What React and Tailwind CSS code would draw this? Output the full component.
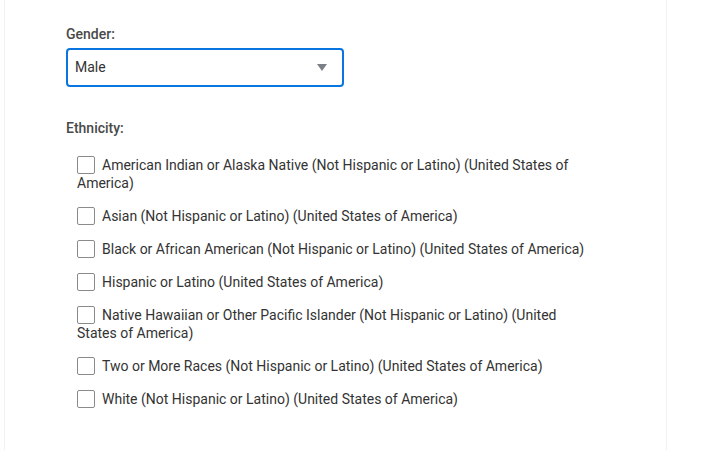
import React from 'react';

const options = [
  'American Indian or Alaska Native (Not Hispanic or Latino) (United States of America)',
  'Asian (Not Hispanic or Latino) (United States of America)',
  'Black or African American (Not Hispanic or Latino) (United States of America)',
  'Hispanic or Latino (United States of America)',
  'Native Hawaiian or Other Pacific Islander (Not Hispanic or Latino) (United States of America)',
  'Two or More Races (Not Hispanic or Latino) (United States of America)',
  'White (Not Hispanic or Latino) (United States of America)',
];

export default function App() {
  return (
    <div className="min-h-screen bg-white" style={{ fontFamily: 'Roboto, "Liberation Sans", sans-serif' }}>
      <div className="ml-[4px] w-[663px] h-[450px] border-x border-[#f1f1f1] pl-[61px] pt-[25px]">
        <label className="block text-[14px] font-medium leading-[18px] text-[#494949]">Gender:</label>
        <div className="mt-[5px] w-[278px] h-[39px] rounded-[4px] border-2 border-[#0875e1] flex items-center justify-between pl-[7px] pr-[15px]">
          <span className="text-[14px] text-[#333333]">Male</span>
          <svg width="10" height="7" viewBox="0 0 10 7">
            <path d="M0 0 H10 L5 7 Z" fill="#7b7f86" />
          </svg>
        </div>

        <label className="block mt-[32px] text-[14px] font-medium leading-[18px] text-[#494949]">Ethnicity:</label>

        <div className="mt-[19px] ml-[11px] w-[515px]">
          {options.map((opt) => (
            <div key={opt} className="mb-[15px] text-[14px] leading-[18px] text-[#333333]">
              <span className="inline-block align-[-4px] w-[18px] h-[18px] rounded-[2px] border border-[#8a8a8a] bg-white mr-[7px]" />
              {opt}
            </div>
          ))}
        </div>
      </div>
    </div>
  );
}
